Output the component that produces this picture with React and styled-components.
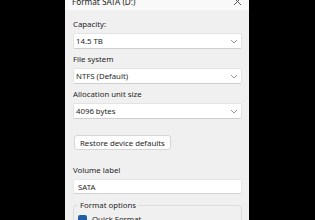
import React from 'react';
import styled, { createGlobalStyle } from 'styled-components';

const Global = createGlobalStyle`
  html, body {
    margin: 0;
    padding: 0;
    background: #000;
    overflow: hidden;
  }
  body {
    font-family: "Noto Sans", "Open Sans", sans-serif;
    font-size: 7.8px;
    color: #1f1f1f;
  }
`;

function Chevron() {
  return (
    <svg width="8" height="5" viewBox="0 0 8 5">
      <path d="M1 1 L4 4 L7 1" fill="none" stroke="#8a8a8a" strokeWidth="0.9" />
    </svg>
  );
}

function CloseX() {
  return (
    <svg width="9" height="9" viewBox="0 0 9 9">
      <path d="M1 1 L8 8 M8 1 L1 8" fill="none" stroke="#444" strokeWidth="0.9" />
    </svg>
  );
}

export default function App() {
  return (
    <Screen>
      <Global />
      <Dialog>
        <TitleBar>
          <Title>Format SATA (D:)</Title>
          <CloseX />
        </TitleBar>
        <Body>
          <Label>Capacity:</Label>
          <Select>
            <span>14.5 TB</span>
            <Chevron />
          </Select>
          <Label>File system</Label>
          <Select>
            <span>NTFS (Default)</span>
            <Chevron />
          </Select>
          <Label>Allocation unit size</Label>
          <Select>
            <span>4096 bytes</span>
            <Chevron />
          </Select>
          <Button>Restore device defaults</Button>
          <Label>Volume label</Label>
          <TextField>SATA</TextField>
          <Group>
            <GroupLegend>Format options</GroupLegend>
            <CheckRow>
              <Check />
              <span>Quick Format</span>
            </CheckRow>
          </Group>
        </Body>
      </Dialog>
    </Screen>
  );
}

const Screen = styled.div`
  width: 315px;
  height: 220px;
  display: flex;
  align-items: flex-start;
  padding-left: 65px;
  box-sizing: border-box;
  overflow: hidden;
`;

const Dialog = styled.div`
  width: 184px;
  height: 240px;
  flex-shrink: 0;
  margin-top: -10px;
  background: #f0f0f0;
  display: flex;
  flex-direction: column;
`;

const TitleBar = styled.div`
  height: 20px;
  flex-shrink: 0;
  background: #f9f9f9;
  display: flex;
  align-items: center;
  justify-content: space-between;
  padding: 2px 7px 0 7px;
  box-sizing: border-box;
`;

const Title = styled.div`
  font-size: 8.2px;
  color: #222;
`;

const Body = styled.div`
  display: flex;
  flex-direction: column;
  padding: 9px 7px 0 8px;
  & > * {
    flex-shrink: 0;
  }
`;

const Label = styled.div`
  height: 11px;
  line-height: 11px;
  margin-bottom: 3px;
`;

const Select = styled.div`
  height: 16px;
  background: #fff;
  border: 1px solid #e3e3e3;
  border-bottom-color: #cfcfcf;
  border-radius: 2px;
  box-sizing: border-box;
  display: flex;
  align-items: center;
  justify-content: space-between;
  padding: 0 3px 0 2px;
  margin-bottom: 5px;
`;

const Button = styled.div`
  align-self: flex-start;
  margin: 11px 0 15px 1px;
  height: 15px;
  padding: 0 5px;
  display: flex;
  align-items: center;
  background: #fdfdfd;
  border: 1px solid #d6d6d6;
  border-radius: 3px;
  box-sizing: border-box;
`;

const TextField = styled.div`
  height: 15px;
  background: #fff;
  border: 1px solid #e6e6e6;
  border-bottom-color: #d2d2d2;
  border-radius: 2px;
  box-sizing: border-box;
  display: flex;
  align-items: center;
  padding: 0 4px;
  margin-bottom: 11px;
`;

const Group = styled.div`
  position: relative;
  border: 1px solid #dcdcdc;
  border-radius: 3px;
  height: 30px;
  padding: 8px 0 0 4px;
  box-sizing: border-box;
`;

const GroupLegend = styled.div`
  position: absolute;
  top: -6px;
  left: 4px;
  padding: 0 2px;
  background: #f0f0f0;
  line-height: 11px;
`;

const CheckRow = styled.div`
  display: flex;
  align-items: center;
  gap: 5px;
`;

const Check = styled.div`
  width: 9px;
  height: 9px;
  border-radius: 2px;
  background: #1f5fa8;
`;
